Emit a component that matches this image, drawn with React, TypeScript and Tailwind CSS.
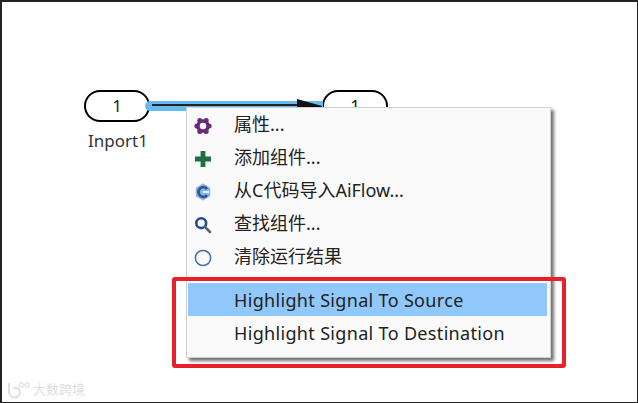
const font = { fontFamily: '"Noto Sans", "Noto Sans CJK SC", sans-serif' };

function GearIcon() {
  return (
    <svg width="18" height="18" viewBox="0 0 18 18">
      <circle cx="9" cy="9" r="5" fill="none" stroke="#6b2a78" strokeWidth="3.4" />
      <g fill="#6b2a78">
        <circle cx="5.8" cy="3.6" r="2.5" />
        <circle cx="12.2" cy="3.6" r="2.5" />
        <circle cx="2.9" cy="9" r="2.5" />
        <circle cx="15.1" cy="9" r="2.5" />
        <circle cx="5.8" cy="14.4" r="2.5" />
        <circle cx="12.2" cy="14.4" r="2.5" />
      </g>
      <circle cx="9" cy="9" r="2.8" fill="#fafafa" />
    </svg>
  );
}

function PlusIcon() {
  return (
    <svg width="18" height="18" viewBox="0 0 18 18">
      <path d="M6.6 1h4.8v5.6H17v4.8h-5.6V17H6.6v-5.6H1V6.6h5.6z" fill="#1f6f43" />
    </svg>
  );
}

function ImportIcon() {
  return (
    <svg width="18" height="18" viewBox="0 0 18 18">
      <path d="M9 0.5l7.2 4.2v8.6L9 17.5l-7.2-4.2V4.7z" fill="#8fb4e0" />
      <path d="M13 6A4.8 4.8 0 1 0 13 12" fill="none" stroke="#2a5c9c" strokeWidth="2.8" />
      <path d="M9 8h6v2H9z" fill="#e4edf8" />
    </svg>
  );
}

function SearchIcon() {
  return (
    <svg width="18" height="18" viewBox="0 0 18 18">
      <circle cx="7.2" cy="7.2" r="4.9" fill="none" stroke="#1f4f8f" strokeWidth="2.6" />
      <path d="M11 11l5 5" stroke="#5b6670" strokeWidth="2.6" strokeLinecap="round" />
    </svg>
  );
}

function CircleIcon() {
  return (
    <svg width="18" height="18" viewBox="0 0 18 18">
      <circle cx="9" cy="9" r="7.6" fill="none" stroke="#3f70a8" strokeWidth="1.5" />
    </svg>
  );
}

function WatermarkLogo() {
  return (
    <svg width="24" height="18" viewBox="0 0 24 18" fill="none" stroke="#dedede" strokeWidth="2">
      <path d="M2 2v9a5.5 5.5 0 0 0 11 0a4 4 0 0 0-6-3.4" />
      <circle cx="14" cy="4" r="2.2" strokeWidth="1.2" />
      <circle cx="20" cy="4" r="2.2" strokeWidth="1.2" />
    </svg>
  );
}

const items = [
  { label: '属性...', icon: <GearIcon /> },
  { label: '添加组件...', icon: <PlusIcon /> },
  { label: '从C代码导入AiFlow...', icon: <ImportIcon /> },
  { label: '查找组件...', icon: <SearchIcon /> },
  { label: '清除运行结果', icon: <CircleIcon /> },
];

function Port({ className }: { className: string }) {
  return (
    <div
      className={`absolute flex h-[32px] w-[66px] items-center justify-center rounded-[16px] border-2 border-black bg-white text-[17px] text-[#222] ${className}`}
    >
      1
    </div>
  );
}

function MenuRow({ label, icon, active }: { label: string; icon?: React.ReactNode; active?: boolean }) {
  return (
    <div className={`flex h-[33px] items-center ${active ? 'bg-[#90c8fb]' : ''}`}>
      <div className="flex w-[46px] justify-center pr-[16px]">{icon}</div>
      <span className={`text-[18px] whitespace-nowrap text-[#222] ${icon ? 'pb-[2px]' : 'pt-[2px] tracking-[0.33px]'}`}>
        {label}
      </span>
    </div>
  );
}

export default function App() {
  return (
    <div
      className="relative h-[403px] w-[638px] overflow-hidden border-t-2 border-r border-b border-l-2 border-[#222] bg-white"
      style={font}
    >
      <Port className="top-[88px] left-[82px]" />
      <Port className="top-[88px] left-[320px]" />
      <div className="absolute top-[99px] left-[143px] h-[10px] w-[178px] rounded-l-full bg-[#66bbf2]" />
      <div className="absolute top-[102px] left-[150px] h-[2px] w-[150px] bg-[#222]" />
      <svg className="absolute top-[97px] left-[295px]" width="26" height="10" viewBox="0 0 26 10">
        <path d="M0 0l25 7v1H0z" fill="#111" />
      </svg>
      <div className="absolute top-[126px] left-[86px] text-[17px] text-[#333]">Inport1</div>

      <div className="absolute top-[105px] left-[184px] w-[365px] border border-[#d0d0d0] bg-[#fafafa] p-[1px] shadow-[3px_3px_3px_rgba(0,0,0,0.55)]">
        {items.map((item) => (
          <MenuRow key={item.label} label={item.label} icon={item.icon} />
        ))}
        <div className="mx-[1px] my-[4px] h-px bg-[#cfcfcf]" />
        <div className="mr-[2px]">
          <MenuRow label="Highlight Signal To Source" active />
          <MenuRow label="Highlight Signal To Destination" />
        </div>
        <div className="h-[7px]" />
      </div>

      <div className="absolute top-[275px] left-[170px] h-[91px] w-[394px] rounded-[3px] border-[4px] border-[#e8202c]" />

      <div className="absolute top-[378px] left-[5px] flex items-center gap-[2px] text-[13px] text-[#dedede]">
        <WatermarkLogo />
        <span>大数跨境</span>
      </div>
    </div>
  );
}
